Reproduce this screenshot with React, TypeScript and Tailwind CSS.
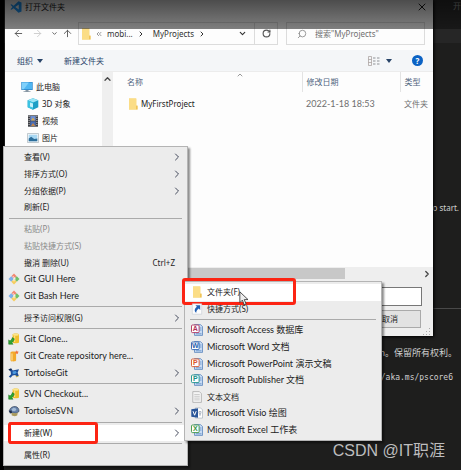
import type { ReactNode } from 'react';
import { ArrowLeft, ArrowRight, ArrowUp, ChevronDown, ChevronRight, ChevronsLeft, ChevronUp, RotateCw, Search, X } from 'lucide-react';

type MenuEntry = {
  label: string;
  icon?: ReactNode;
  shortcut?: string;
  submenu?: boolean;
  disabled?: boolean;
  active?: boolean;
  latin?: boolean;
  mark?: string;
};

function FolderIcon({ className = 'h-3 w-3' }: { className?: string }) {
  return (
    <svg viewBox="0 0 12 12" className={className} aria-hidden="true">
      <path d="M2 0.5h7v11H2z" fill="#f3cf6b" />
      <path d="M2 0.5h7.5v7.5h1v3.5H2z" fill="#fbdd86" />
      <path d="M9.2 7.5h1.3v4H9.2z" fill="#eebf4e" />
    </svg>
  );
}

function VsCodeIcon() {
  return (
    <svg viewBox="0 0 24 24" className="h-3 w-3" aria-hidden="true">
      <path d="M17 0.5 7.3 9.6 3 6.3 1 7.3l4 4.7-4 4.7 2 1 4.3-3.3L17 23.5l6-2.6V3.1zM17.5 6.8v10.4L10.6 12z" fill="#1f9cff" fillRule="evenodd" />
    </svg>
  );
}

function ComputerIcon() {
  return (
    <svg viewBox="0 0 12 12" className="h-3 w-3" aria-hidden="true">
      <path d="M0.3 1h11.4v8H0.3z" fill="#2f86c9" />
      <path d="M0.9 1.6h10.2v6.6H0.9z" fill="#4fb6f2" />
      <path d="M0.9 1.6h7L2.8 8.2H0.9z" fill="#7fd0fb" />
      <path d="M4.5 9h3v1.2h2v0.9H2.5v-0.9h2z" fill="#8796a3" />
    </svg>
  );
}

function CubeIcon() {
  return (
    <svg viewBox="0 0 12 12" className="h-3 w-3" aria-hidden="true">
      <path d="M6 0.3 11.3 2.3v7L6 11.7 0.7 9.3v-7z" fill="#1d9fc6" />
      <path d="M6 0.3 11.3 2.3 6 4.4 0.7 2.3z" fill="#9be6f6" />
      <path d="M0.7 2.3 6 4.4v7.3L0.7 9.3z" fill="#3cc3e2" />
      <path d="M3 4.4 6 5.4v4.2L3 8.6z" fill="#c3f0fa" />
    </svg>
  );
}

function VideoIcon() {
  return (
    <svg viewBox="0 0 12 12" className="h-3 w-3" aria-hidden="true">
      <path d="M1 0.3h10v11.4H1z" fill="#3d3f45" />
      <path d="M3.3 1h5.4v4.6H3.3z" fill="#6d8fd0" />
      <path d="M3.3 6.3h5.4V11H3.3z" fill="#4a6db4" />
      <path d="M4 5.6 6 2.4l2 3.2z" fill="#d9a94c" />
      <path d="M4 11l2-3 2.3 3z" fill="#c2864a" />
      <path d="M2.1 1v10M9.9 1v10" stroke="#d5d5d5" strokeWidth="0.9" strokeDasharray="1 1" />
    </svg>
  );
}

function PictureIcon() {
  return (
    <svg viewBox="0 0 12 12" className="h-3 w-3" aria-hidden="true">
      <path d="M0.5 1.5h11v9H0.5z" fill="#f5f7f8" stroke="#a9b4bb" strokeWidth="0.7" />
      <path d="M1.7 2.7h8.6v6.6H1.7z" fill="#a8d8f3" />
      <path d="M1.7 9.3V6.5l2.5-1.7 3 2.2 3.1-0.6v2.9z" fill="#2d6f9c" />
    </svg>
  );
}

function GitIcon() {
  return (
    <svg viewBox="0 0 12 12" className="h-3 w-3" aria-hidden="true">
      <path d="M6 0.5 8.700 3.200 6 5.900 3.300 3.200z" fill="#f28872" />
      <path d="M3.200 3.300 5.900 6 3.200 8.700 0.500 6z" fill="#7db0ea" />
      <path d="M8.800 3.300 11.500 6 8.800 8.700 6.100 6z" fill="#6fc06a" />
      <path d="M6 6.100 8.700 8.800 6 11.500 3.300 8.800z" fill="#f6cd5e" />
      <path d="M4.900 3.200 6 4.300v4M6 4.800l1.800 1.400" stroke="#fff" strokeWidth="0.9" fill="none" />
    </svg>
  );
}

function CheckoutIcon() {
  return (
    <svg viewBox="0 0 12 12" className="h-3 w-3" aria-hidden="true">
      <path d="M4.600 1.600C4.600 0.200 11 0.200 11 1.600v7.600c0 1.500-6.400 1.500-6.400 0z" fill="#f0bf2c" />
      <path d="M6.600 2.500v6.500" stroke="#fbe083" strokeWidth="1.200" />
      <ellipse cx="7.800" cy="1.700" rx="3.100" ry="1" fill="#fbe58b" />
      <path d="M0.700 11.200V6.900l1.300 1.200C3 7.300 4 6.300 4.300 4.600l2 1.200c-0.300 1.800-1.200 3-2.500 4l1.300 1.400z" fill="#2fa52f" stroke="#16701b" strokeWidth="0.500" />
    </svg>
  );
}

function CreateIcon() {
  return (
    <svg viewBox="0 0 12 12" className="h-3 w-3" aria-hidden="true">
      <path d="M2.500 2.500c0-1.400 5.600-1.400 5.600 0v7.700c0 1.600-5.600 1.600-5.600 0z" fill="#f2a92b" />
      <path d="M4 3.500v7" stroke="#fbd98a" strokeWidth="1.300" />
      <path d="m8.800 0.300 0.600 1.200 1.400 0.200-1 1 0.200 1.400-1.200-0.600-1.200 0.600 0.200-1.400-1-1 1.400-0.200z" fill="#f0703a" />
    </svg>
  );
}

function TortoiseGitIcon() {
  return (
    <svg viewBox="0 0 12 12" className="h-3 w-3" aria-hidden="true">
      <path d="M0.500 2.200 3.200 1.600 4.800 3.400 7 2.900 11 2.300 9.600 5.800 10.800 8.800 8.600 10 7.400 8 4.600 8.400 2.600 10.800 0.800 9.800 3 7.200 2.600 4.600z" fill="#1d4f9c" />
      <path d="M4.600 4.600 7.600 4 8.800 5.400 7 7 4.600 6.800z" fill="#4c9ae0" />
      <path d="M0.500 2.200 3.200 1.600 3.800 2.900 1.400 3.400z" fill="#13284d" />
      <path d="M7.600 8.200 8.600 10l2.200-1.200" stroke="#c9b04a" strokeWidth="0.900" fill="none" />
    </svg>
  );
}

function TortoiseSvnIcon() {
  return (
    <svg viewBox="0 0 12 12" className="h-3 w-3" aria-hidden="true">
      <path d="M1.400 5.400C2.200 2.600 4.800 1.200 7.400 1.500c2.400 0.300 3.800 2.400 3.600 5L8 8.300 3.600 7.600z" fill="#6580a8" stroke="#26354f" strokeWidth="0.600" />
      <path d="M3.600 4.200 5.400 2.800 7.600 3.200 8.400 5 6.400 6.300 4 5.800z" fill="#a3bad6" />
      <path d="M0.600 5.800 3.600 5.600 4 8 2 8.400z" fill="#1c2c4b" />
      <path d="M3.400 8 8.600 8.300 9.800 7.400 9.200 10.600 6.800 11.200 3.800 10.400z" fill="#a99a5c" />
    </svg>
  );
}

function ShortcutIcon() {
  return (
    <svg viewBox="0 0 12 12" className="h-3 w-3" aria-hidden="true">
      <path d="M1.3 0.8h9.4v10.4H1.3z" fill="#fdfdfd" stroke="#c4cbd3" strokeWidth="0.6" />
      <path d="M4.400 2.200h4.800v4.800L7.800 5.600C6 6.800 5.200 8 5.300 9.800 3 8.400 3.300 5.600 5.900 3.700z" fill="#1f5fb4" />
    </svg>
  );
}

function OfficeIcon({ color, letter }: { color: string; letter: string }) {
  return (
    <svg viewBox="0 0 12 12" className="h-3 w-3" aria-hidden="true">
      <path d="M3.5 0.6h6l2 2v8.8h-8z" fill="#c9dcf4" stroke="#4a78b5" strokeWidth="0.7" />
      <path d="M8.5 4h2M8.5 6h2M5 9.8h5.5" stroke="#5c8cc8" strokeWidth="0.8" />
      <rect x="0.5" y="1" width="7.6" height="7.6" rx="1" fill="#fff" stroke={color} strokeWidth="0.9" />
      <text x="4.3" y="7.3" textAnchor="middle" fontSize="7" fontWeight="700" fontFamily="Liberation Sans, sans-serif" fill={color}>
        {letter}
      </text>
    </svg>
  );
}

function VisioIcon() {
  return (
    <svg viewBox="0 0 12 12" className="h-3 w-3" aria-hidden="true">
      <path d="M4.5 0.9h5l2 2v8.2h-7z" fill="#fff" stroke="#9aa7b5" strokeWidth="0.6" />
      <path d="M8 4.5h2v1.8H8zM8 8h2M9 6.3V8" stroke="#8796a8" strokeWidth="0.6" fill="none" />
      <path d="M0.3 2.3 7 1.2v9.6L0.3 9.7z" fill="#2a5699" />
      <path d="m2 4.2 1.6 4 1.6-4" stroke="#fff" strokeWidth="1" fill="none" />
    </svg>
  );
}

function TextFileIcon() {
  return (
    <svg viewBox="0 0 12 12" className="h-3 w-3" aria-hidden="true">
      <path d="M1.8 0.6h6.6l2 2v8.8H1.8z" fill="#f4f4f4" stroke="#a2a2a2" strokeWidth="0.7" />
      <path d="M3.3 3.5h5.4M3.3 5.3h5.4M3.3 7.1h5.4M3.3 8.9h5.4" stroke="#b0b0b0" strokeWidth="0.6" />
    </svg>
  );
}

function ViewIcon() {
  return (
    <svg viewBox="0 0 12 10" className="h-[10px] w-3" aria-hidden="true">
      <path d="M0.5 0.5h3v9h-3zM0.5 3.5h3M0.5 6.5h3" fill="none" stroke="#a39b98" strokeWidth="0.7" />
      <path d="M5 2h2.5M9 2h2.5M5 5h2.5M9 5h2.5M5 8h2.5M9 8h2.5" stroke="#8f9296" strokeWidth="1" />
    </svg>
  );
}

const contextGroups: MenuEntry[][] = [
  [
    { label: '查看(V)', submenu: true },
    { label: '排序方式(O)', submenu: true },
    { label: '分组依据(P)', submenu: true },
    { label: '刷新(E)' },
  ],
  [
    { label: '粘贴(P)', disabled: true },
    { label: '粘贴快捷方式(S)', disabled: true },
    { label: '撤消 删除(U)', shortcut: 'Ctrl+Z' },
    { label: 'Git GUI Here', icon: <GitIcon />, latin: true },
    { label: 'Git Bash Here', icon: <GitIcon />, latin: true },
  ],
  [{ label: '授予访问权限(G)', submenu: true }],
  [
    { label: 'Git Clone...', icon: <CheckoutIcon />, latin: true },
    { label: 'Git Create repository here...', icon: <CreateIcon />, latin: true },
    { label: 'TortoiseGit', icon: <TortoiseGitIcon />, submenu: true, latin: true },
  ],
  [
    { label: 'SVN Checkout...', icon: <CheckoutIcon />, latin: true },
    { label: 'TortoiseSVN', icon: <TortoiseSvnIcon />, submenu: true, latin: true },
  ],
  [{ label: '新建(W)', submenu: true, active: true, mark: 'left-1 w-[90px] -inset-y-[3px]' }],
  [{ label: '属性(R)' }],
];

const newGroups: MenuEntry[][] = [
  [
    { label: '文件夹(F)', icon: <FolderIcon />, active: true, mark: '-left-[3px] w-[114px] -top-[6px] -bottom-[4px]' },
    { label: '快捷方式(S)', icon: <ShortcutIcon /> },
  ],
  [
    { label: 'Microsoft Access 数据库', icon: <OfficeIcon color="#b0305c" letter="A" />, latin: true },
    { label: 'Microsoft Word 文档', icon: <OfficeIcon color="#2b5fae" letter="W" />, latin: true },
    { label: 'Microsoft PowerPoint 演示文稿', icon: <OfficeIcon color="#d9552a" letter="P" />, latin: true },
    { label: 'Microsoft Publisher 文档', icon: <OfficeIcon color="#148f86" letter="P" />, latin: true },
    { label: '文本文档', icon: <TextFileIcon /> },
    { label: 'Microsoft Visio 绘图', icon: <VisioIcon />, latin: true },
    { label: 'Microsoft Excel 工作表', icon: <OfficeIcon color="#3a9440" letter="X" />, latin: true },
  ],
];

type MenuProps = {
  groups: MenuEntry[][];
  label: string;
  className: string;
  indent?: string;
};

function Menu({ groups, label, className, indent = 'pl-1' }: MenuProps) {
  return (
    <div
      role="menu"
      aria-label={label}
      className={`absolute flex flex-col border border-[#b4b4b4] bg-[#ececec] py-[2px] shadow-[2px_2px_2px_rgba(0,0,0,0.45)] ${className}`}
    >
      {groups.map((group, index) => (
        <div key={index} className="contents">
          {index > 0 && <hr className="mx-[5px] my-[2px] border-[#aaa]" />}
          {group.map((entry) => (
            <button
              key={entry.label}
              type="button"
              role="menuitem"
              disabled={entry.disabled}
              className={`relative flex min-h-0 flex-1 items-center pr-1 text-left whitespace-nowrap ${indent} ${entry.active ? 'bg-white' : ''} ${entry.disabled ? 'text-[#8a8a8a]' : 'text-[#222]'} ${entry.latin ? "font-['Lato','Noto_Sans_CJK_SC',sans-serif] text-[9px]" : ''}`}
            >
              <span className="flex w-4 shrink-0 items-center">{entry.icon}</span>
              <span className="flex-1">{entry.label}</span>
              {entry.shortcut && <span className="pr-2">{entry.shortcut}</span>}
              {entry.submenu && <ChevronRight className="h-3 w-3 text-[#444a5c]" strokeWidth={2} />}
              {entry.mark && <span className={`absolute rounded-[3px] border-3 border-[#fc2413] ${entry.mark}`} />}
            </button>
          ))}
        </div>
      ))}
    </div>
  );
}

function Sidebar() {
  const places = [
    { name: '3D 对象', icon: <CubeIcon /> },
    { name: '视频', icon: <VideoIcon /> },
    { name: '图片', icon: <PictureIcon /> },
  ];

  return (
    <div className="flex w-[108px] shrink-0">
      <ul className="flex-1 pt-[6px] pl-4 text-[#222]">
        <li className="flex h-[17px] items-center gap-[3px]">
          <ComputerIcon />
          此电脑
        </li>
        {places.map((place) => (
          <li key={place.name} className="flex h-[17px] items-center gap-[3px] pl-[6px]">
            {place.icon}
            {place.name}
          </li>
        ))}
      </ul>
      <div className="w-[11px] bg-[#efefef] pt-[2px]">
        <ChevronUp className="h-[10px] w-[11px] text-[#444]" strokeWidth={3} />
      </div>
    </div>
  );
}

function FileList() {
  return (
    <div className="relative min-w-0 flex-1">
      <ChevronUp className="absolute -top-[1px] left-[123px] h-2 w-2 text-[#666]" />
      <table className="w-full table-fixed text-left text-[#6f6f6f]">
        <thead className="text-[#506580]">
          <tr className="h-5">
            <th className="border-r border-[#e3e3e3] pl-[14px] font-normal">名称</th>
            <th className="w-[98px] border-r border-[#e3e3e3] pl-1 font-normal">修改日期</th>
            <th className="w-[33px] pl-1 font-normal">类型</th>
          </tr>
        </thead>
        <tbody>
          <tr className="h-6 whitespace-nowrap">
            <td className="pl-[14px] text-[#222]">
              <span className="flex items-center gap-[2px]">
                <FolderIcon />
                MyFirstProject
              </span>
            </td>
            <td className="pl-1 font-['Lato',sans-serif] text-[9px]">2022-1-18 18:53</td>
            <td className="pl-1">文件夹</td>
          </tr>
        </tbody>
      </table>
    </div>
  );
}

function OpenFolderDialog() {
  return (
    <section aria-label="打开文件夹" className="absolute top-0 right-7 left-[5px] bg-[#fdfdfd] shadow-[1px_1px_3px_#000]">
      <header className="flex h-[22px] items-start justify-between px-[5px] pt-[1px] text-[#222]">
        <h1 className="flex items-center gap-[3px]">
          <VsCodeIcon />
          打开文件夹
        </h1>
        <button type="button" aria-label="关闭">
          <X className="h-3 w-3" strokeWidth={2} />
        </button>
      </header>

      <div className="flex h-[23px] items-stretch pr-2 pl-2 text-[#555]">
        <nav className="flex w-[65px] items-center gap-2">
          <ArrowLeft className="h-[11px] w-[11px]" strokeWidth={2} />
          <ArrowRight className="h-[11px] w-[11px] text-[#ccc]" strokeWidth={2} />
          <ChevronDown className="h-[7px] w-[7px]" strokeWidth={3} />
          <ArrowUp className="-ml-1 h-[11px] w-[11px]" strokeWidth={2} />
        </nav>
        <div className="flex flex-1 items-center border border-[#dcdcdc] pl-[1px] text-[#333]">
          <FolderIcon />
          <ChevronsLeft className="ml-[3px] h-2 w-2 text-[#666]" strokeWidth={2} />
          <span className="pl-1">mobi...</span>
          <ChevronRight className="mx-1 h-2 w-2" strokeWidth={3} />
          <span className="pl-1">MyProjects</span>
          <ChevronRight className="mx-1 h-2 w-2" strokeWidth={3} />
          <ChevronDown className="mr-[7px] ml-auto h-[9px] w-[9px]" strokeWidth={3} />
        </div>
        <button type="button" aria-label="刷新" className="flex w-[23px] items-center justify-center border border-l-0 border-[#dcdcdc]">
          <RotateCw className="h-[9px] w-[9px]" strokeWidth={3} />
        </button>
        <label className="ml-2 flex w-[139px] items-center gap-2 border border-[#dcdcdc] pl-[10px]">
          <Search className="h-[10px] w-[10px] shrink-0 -scale-x-100 text-[#888]" />
          <input type="search" aria-label="搜索" placeholder={'搜索"MyProjects"'} className="w-full min-w-0 outline-none placeholder:text-[#707070]" />
        </label>
      </div>

      <div className="mt-[5px] flex h-[22px] items-center border-b border-[#ececec] bg-[#f4f6f8] pr-[10px] pl-3 text-[#284468]">
        <button type="button" className="flex items-center gap-1">
          组织
          <span className="h-0 w-0 border-x-3 border-t-4 border-x-transparent border-t-[#284468]" />
        </button>
        <button type="button" className="ml-[21px]">新建文件夹</button>
        <button type="button" aria-label="更改视图" className="ml-auto flex items-center gap-[6px]">
          <ViewIcon />
          <span className="h-0 w-0 border-x-3 border-t-4 border-x-transparent border-t-[#284468]" />
        </button>
        <button type="button" aria-label="帮助" className="ml-5 flex h-[11px] w-[11px] items-center justify-center rounded-full bg-[#0b62c4] font-bold text-white">
          ?
        </button>
      </div>

      <div className="flex h-[195px]">
        <Sidebar />
        <FileList />
      </div>

      <footer className="flex h-[69px] flex-col items-end bg-[#eee]">
        <div className="flex h-[13px] w-full items-center pl-[108px]">
          <div className="mr-[77px] ml-5 h-[11px] flex-1 bg-[#c8c8c8]" />
          <ChevronRight className="mr-[1px] h-[10px] w-[10px] text-[#444]" strokeWidth={3} />
        </div>
        <input aria-label="文件夹" className="mt-[7px] mr-[11px] h-[19px] w-[300px] border border-[#777] bg-white" />
        <button type="button" className="mt-1 mr-3 h-[18px] w-[62px] border border-[#aaa] bg-[#e2e2e2] text-[#222]">取消</button>
        <svg viewBox="0 0 8 8" className="mr-[2px] h-2 w-2 shrink-0" aria-hidden="true">
          <path d="M6 0h1v1H6zM3 3h1v1H3zM6 3h1v1H6zM0 6h1v1H0zM3 6h1v1H3zM6 6h1v1H6z" fill="#aaa" />
        </svg>
      </footer>
    </section>
  );
}

function Editor() {
  return (
    <main className="flex min-h-[470px] flex-col items-end border-l-4 border-black bg-[#1e1e1d] text-[#d0d0d0]">
      <div className="h-[29px] w-full bg-[#303030] text-right text-[#aaa]">开</div>
      <div className="h-[14px] w-full bg-[#262626]" />
      <p className="mt-[159px] pr-[2px] leading-3">o start.</p>
      <hr className="mt-[94px] w-full border-[#494949]" />
      <p className="mt-[38px] pr-1 text-[9px] leading-3">Corporation。保留所有权利。</p>
      <p className="mt-[13px] pr-2 font-['DejaVu_Sans_Mono','Noto_Sans_CJK_SC',monospace] leading-3">https://aka.ms/pscore6</p>
      <p className="mt-[55px] pr-4 font-['Liberation_Sans','Noto_Sans_CJK_SC',sans-serif] text-[16px] leading-6 text-[#bdbdbd]">CSDN @IT职涯</p>
    </main>
  );
}

export default function App() {
  return (
    <div className="relative overflow-hidden font-['Noto_Sans','Noto_Sans_CJK_SC',sans-serif] text-[8px] leading-3">
      <Editor />
      <OpenFolderDialog />
      <div className="pointer-events-none absolute inset-x-0 top-0 h-[29px] bg-linear-to-b from-black/70 to-black/50" />
      <Menu groups={contextGroups} label="快捷菜单" className="top-[146px] left-[3px] h-[320px] w-[185px]" />
      <Menu groups={newGroups} label="新建" indent="pl-[6px]" className="top-[281px] left-[184px] h-[160px] w-[198px]" />
      <svg viewBox="0 0 12 18" className="pointer-events-none absolute top-[291px] left-[239px] h-[15px] w-[10px]" aria-hidden="true">
        <path d="M1 1v13l3-3 2.2 5.5 2.3-1L6.3 10.3h4.5z" fill="#eee" stroke="#333" strokeWidth="1" />
      </svg>
    </div>
  );
}
